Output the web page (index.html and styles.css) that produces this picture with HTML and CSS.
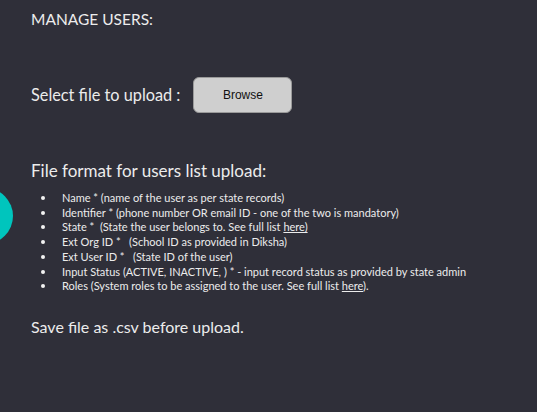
FILE: index.html
```html
<!DOCTYPE html>
<html>
<head>
<meta charset="utf-8">
<link rel="stylesheet" href="styles.css">
</head>
<body>
<div class="page">
  <div class="blob"></div>
  <h1 class="title">MANAGE USERS:</h1>
  <div class="upload-row">
    <span class="upload-label">Select file to upload :</span>
    <button class="browse">Browse</button>
  </div>
  <h2 class="format-title">File format for users list upload:</h2>
  <ul class="fields">
    <li>Name * (name of the user as per state records)</li>
    <li>Identifier * (phone number OR email ID - one of the two is mandatory)</li>
    <li>State *&nbsp; (State the user belongs to. See full list <a href="#">here)</a></li>
    <li>Ext Org ID *&nbsp;&nbsp; (School ID as provided in Diksha)</li>
    <li>Ext User ID *&nbsp;&nbsp; (State ID of the user)</li>
    <li>Input Status (ACTIVE, INACTIVE, ) * - input record status as provided by state admin</li>
    <li>Roles (System roles to be assigned to the user. See full list <a href="#">here</a>).</li>
  </ul>
  <p class="note">Save file as .csv before upload.</p>
</div>
</body>
</html>
```
FILE: styles.css
```css
html, body {
  margin: 0;
  padding: 0;
  background: #2f2f39;
  height: 100%;
  overflow: hidden;
}
.page {
  position: relative;
  padding: 8px 0 0 31px;
  color: #ececec;
  font-family: "Lato", "Open Sans", sans-serif;
  height: 412px;
  box-sizing: border-box;
}
.blob {
  position: absolute;
  left: -43px;
  top: 188px;
  width: 56px;
  height: 56px;
  border-radius: 50%;
  background: #00c5bd;
}
.title {
  margin: 0;
  font-size: 15.5px;
  font-weight: 400;
  line-height: 22px;
}
.upload-row {
  display: flex;
  align-items: center;
  margin-top: 47px;
  gap: 13px;
}
.upload-label {
  font-size: 16.3px;
  line-height: 22px;
}
.browse {
  width: 99px;
  height: 36px;
  border-radius: 6px;
  border: 1px solid #9a9a9a;
  background: #cfcfcf;
  color: #111;
  font-family: "Liberation Sans", Arial, sans-serif;
  font-size: 12px;
  padding: 0;
}
.format-title {
  margin: 46px 0 0 0;
  font-size: 17px;
  font-weight: 400;
  line-height: 24px;
}
.fields {
  list-style: none;
  margin: 8px 0 0 0;
  padding: 0 0 0 10px;
  font-size: 11px;
  line-height: 14.7px;
}
.fields li::before {
  content: "";
  display: inline-block;
  width: 4px;
  height: 4px;
  border-radius: 50%;
  background: #f2f2f2;
  margin-right: 17px;
  vertical-align: 2px;
}
.fields a {
  color: #ececec;
  text-decoration: underline;
}
.note {
  margin: 22px 0 0 0;
  font-size: 16px;
  line-height: 22px;
}
```
